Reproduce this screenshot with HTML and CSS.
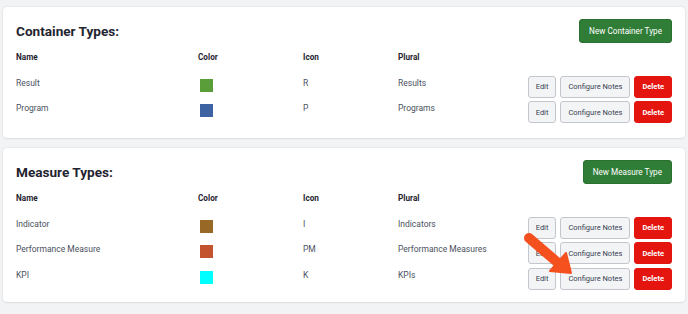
FILE: index.html
```html
<!DOCTYPE html>
<html>
<head>
<meta charset="utf-8">
<link rel="stylesheet" href="styles.css">
</head>
<body>
<div class="page">
  <section class="card">
    <div class="card-head">
      <h2 class="title">Container Types:</h2>
      <button class="btn-new">New Container Type</button>
    </div>
    <div class="row header">
      <div>Name</div><div>Color</div><div>Icon</div><div>Plural</div><div></div>
    </div>
    <div class="row">
      <div class="cell">Result</div>
      <div><span class="swatch green"></span></div>
      <div class="cell">R</div>
      <div class="cell">Results</div>
      <div class="actions"><button class="btn">Edit</button><button class="btn">Configure Notes</button><button class="btn del">Delete</button></div>
    </div>
    <div class="row">
      <div class="cell">Program</div>
      <div><span class="swatch blue"></span></div>
      <div class="cell">P</div>
      <div class="cell">Programs</div>
      <div class="actions"><button class="btn">Edit</button><button class="btn">Configure Notes</button><button class="btn del">Delete</button></div>
    </div>
  </section>

  <section class="card last">
    <div class="card-head">
      <h2 class="title">Measure Types:</h2>
      <button class="btn-new">New Measure Type</button>
    </div>
    <div class="row header">
      <div>Name</div><div>Color</div><div>Icon</div><div>Plural</div><div></div>
    </div>
    <div class="row">
      <div class="cell">Indicator</div>
      <div><span class="swatch brown"></span></div>
      <div class="cell">I</div>
      <div class="cell">Indicators</div>
      <div class="actions"><button class="btn">Edit</button><button class="btn">Configure Notes</button><button class="btn del">Delete</button></div>
    </div>
    <div class="row">
      <div class="cell">Performance Measure</div>
      <div><span class="swatch rust"></span></div>
      <div class="cell">PM</div>
      <div class="cell">Performance Measures</div>
      <div class="actions"><button class="btn">Edit</button><button class="btn">Configure Notes</button><button class="btn del">Delete</button></div>
    </div>
    <div class="row">
      <div class="cell">KPI</div>
      <div><span class="swatch cyan"></span></div>
      <div class="cell">K</div>
      <div class="cell">KPIs</div>
      <div class="actions"><button class="btn">Edit</button><button class="btn">Configure Notes</button><button class="btn del">Delete</button></div>
    </div>
  </section>

  <svg class="arrow" width="688" height="314" viewBox="0 0 688 314">
    <line x1="529" y1="238" x2="557" y2="262" stroke="#f4511e" stroke-width="10" stroke-linecap="round"/>
    <polygon points="566,253 550,271 571,273" fill="#f4511e" stroke="#f4511e" stroke-width="2" stroke-linejoin="round"/>
  </svg>
</div>
</body>
</html>
```

FILE: styles.css
```css
html, body {
  margin: 0;
  padding: 0;
}
body {
  background: #f2f3f5;
  font-family: Roboto, "Liberation Sans", Arial, sans-serif;
  width: 688px;
  height: 314px;
  overflow: hidden;
}
.page {
  position: relative;
  padding: 7px 3px 0 3px;
  display: flex;
  flex-direction: column;
  gap: 10px;
}
.card {
  background: #ffffff;
  border-radius: 4px;
  box-shadow: 0 0 2px rgba(0,0,0,0.12), 0 1px 2px rgba(0,0,0,0.06);
  padding: 12px 13px 15px 13px;
}
.card.last {
  padding-bottom: 12px;
}
.card-head {
  display: flex;
  justify-content: space-between;
  align-items: center;
  height: 24px;
  margin-bottom: 7px;
}
.title {
  margin: 0;
  font-size: 13.6px;
  font-weight: 700;
  color: #1f2430;
}
.btn-new {
  height: 24px;
  padding: 0 9px;
  background: #2f7d36;
  color: #ffffff;
  border: 1px solid #2a7030;
  border-radius: 3px;
  font-family: Roboto, "Liberation Sans", Arial, sans-serif;
  font-size: 8.2px;
  font-weight: 400;
}
.row {
  display: grid;
  grid-template-columns: 182px 105px 95px 1fr auto;
  align-items: start;
  margin-bottom: 3.4px;
}
.row:last-child {
  margin-bottom: 0;
}
.row.header {
  margin-bottom: 11.7px;
  font-size: 8.2px;
  font-weight: 700;
  color: #1f2430;
  line-height: 14px;
}
.cell {
  font-size: 8.5px;
  color: #4b5160;
  line-height: 14.6px;
}
.swatch {
  display: block;
  width: 13px;
  height: 13px;
  margin-top: 3.3px;
  margin-left: 2px;
}
.green { background: #5a9e3a; }
.blue { background: #3d63a3; }
.brown { background: #986827; }
.rust { background: #c3522f; }
.cyan { background: #00ffff; }
.actions {
  display: flex;
  gap: 4px;
}
.btn {
  height: 22px;
  padding: 0 7px;
  background: #f3f4f6;
  border: 1px solid #c3c6cc;
  border-radius: 3px;
  color: #374151;
  font-family: Roboto, "Liberation Sans", Arial, sans-serif;
  font-size: 7.5px;
}
.btn.del {
  background: #e3150e;
  border-color: #e3150e;
  color: #ffffff;
  font-weight: 700;
}
.arrow {
  position: absolute;
  left: 0;
  top: 0;
  pointer-events: none;
}
```
